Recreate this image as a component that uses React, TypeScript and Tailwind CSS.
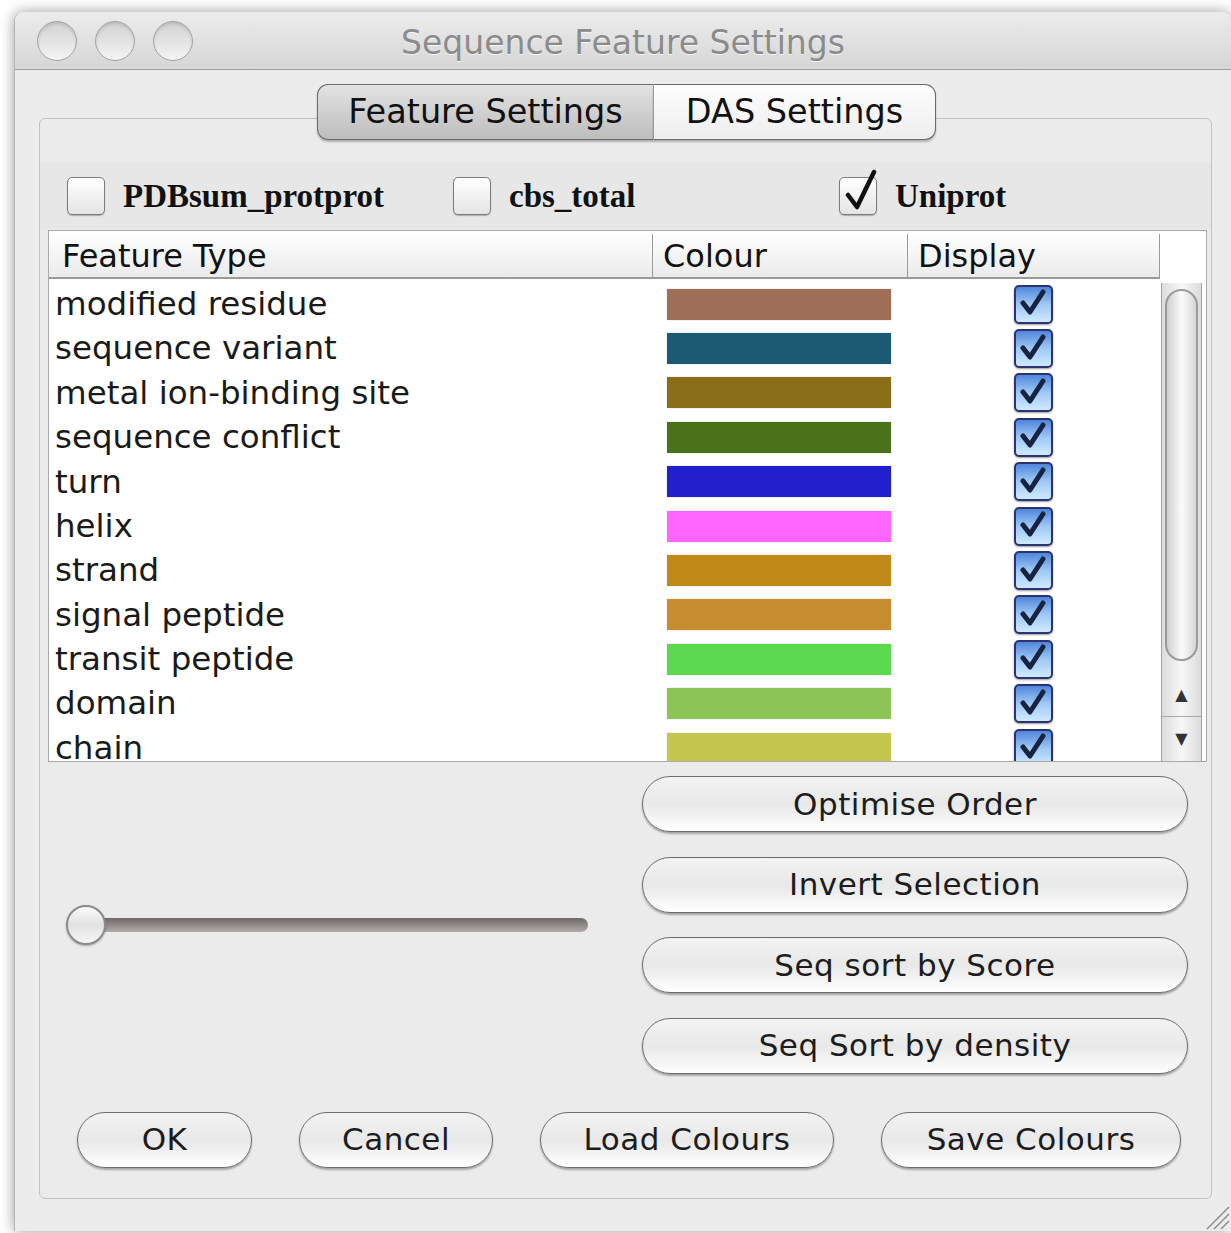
import React from "react";

type Feature = {
  name: string;
  colour: string;
};

const features: Feature[] = [
  { name: "modified residue", colour: "#9e6e56" },
  { name: "sequence variant", colour: "#1a5a73" },
  { name: "metal ion-binding site", colour: "#8a6e18" },
  { name: "sequence conflict", colour: "#4a721a" },
  { name: "turn", colour: "#221fcc" },
  { name: "helix", colour: "#ff66ff" },
  { name: "strand", colour: "#bf8a17" },
  { name: "signal peptide", colour: "#c78c30" },
  { name: "transit peptide", colour: "#5cd84e" },
  { name: "domain", colour: "#8dc456" },
  { name: "chain", colour: "#c3c74e" },
];

const sources = [
  { label: "PDBsum_protprot", checked: false },
  { label: "cbs_total", checked: false },
  { label: "Uniprot", checked: true },
];

const sideActions = [
  "Optimise Order",
  "Invert Selection",
  "Seq sort by Score",
  "Seq Sort by density",
];

const footerActions = [
  { label: "OK", w: "w-[175px]" },
  { label: "Cancel", w: "w-[194px]" },
  { label: "Load Colours", w: "w-[294px]" },
  { label: "Save Colours", w: "w-[300px]" },
];

function TrafficLight() {
  return (
    <span className="h-[40px] w-[40px] rounded-full border border-[#a3a3a3] bg-gradient-to-b from-[#d2d2d2] to-[#f4f4f4] shadow-[inset_0_2px_3px_rgba(0,0,0,0.12)]" />
  );
}

function SourceCheck({ label, checked }: { label: string; checked: boolean }) {
  return (
    <div className="flex w-[386px] shrink-0 items-center gap-[18px]">
      <span className="relative h-[38px] w-[38px] shrink-0 rounded-[5px] border border-[#7a7a7a] bg-gradient-to-b from-white to-[#e4e4e4] shadow-[0_1px_1px_rgba(0,0,0,0.25)]">
        {checked && (
          <svg
            className="absolute -top-[9px] left-[3px]"
            width="36"
            height="44"
            viewBox="0 0 36 44"
          >
            <path
              d="M5 26 L14 38 L31 3"
              fill="none"
              stroke="#111"
              strokeWidth="4.5"
              strokeLinecap="round"
              strokeLinejoin="round"
            />
          </svg>
        )}
      </span>
      <span className="font-['Liberation_Serif',serif] text-[33px] font-bold leading-none text-[#111]">
        {label}
      </span>
    </div>
  );
}

function AquaCheck() {
  return (
    <span className="flex h-[39px] w-[39px] items-center justify-center rounded-[5px] border-2 border-[#2c3370] bg-gradient-to-b from-[#4f86da] via-[#9fc8f5] to-[#cfeaff] shadow-[0_1px_2px_rgba(0,0,0,0.4)]">
      <svg width="30" height="30" viewBox="0 0 30 30">
        <path
          d="M5 14 L12 23 L25 3"
          fill="none"
          stroke="#172340"
          strokeWidth="5"
          strokeLinecap="round"
          strokeLinejoin="round"
        />
      </svg>
    </span>
  );
}

function ScrollBar() {
  return (
    <div className="ml-[2px] mr-[4px] mt-[4px] flex w-[41px] flex-col border-x border-[#a2a2a2] bg-gradient-to-r from-[#dcdcdc] via-[#f7f7f7] to-[#dcdcdc]">
      <div className="mx-[3px] mt-[6px] h-[372px] rounded-full border-2 border-[#9a9a9a] bg-gradient-to-r from-[#cfcfcf] via-[#fbfbfb] to-[#d6d6d6]" />
      <div className="flex-1" />
      <div className="flex h-[44px] items-center justify-center border-b border-[#a8a8a8] text-[16px] leading-none text-[#333]">
        ▲
      </div>
      <div className="flex h-[44px] items-center justify-center text-[16px] leading-none text-[#333]">
        ▼
      </div>
    </div>
  );
}

function PillButton({ label, className }: { label: string; className: string }) {
  return (
    <button
      type="button"
      className={`${className} h-[56px] rounded-full border-[1.5px] border-[#6c6c6c] bg-gradient-to-b from-[#f3f3f3] via-[#e8e8e8] to-white font-['DejaVu_Sans',sans-serif] text-[31px] tracking-[0.5px] text-[#1c1c1c] shadow-[0_2px_2px_rgba(0,0,0,0.3)]`}
    >
      {label}
    </button>
  );
}

export default function App() {
  return (
    <div className="h-[1233px] w-[1231px] overflow-hidden bg-white pl-[14px] pt-[12px] font-['DejaVu_Sans',sans-serif]">
      <div className="relative flex h-[1219px] w-[1217px] flex-col overflow-hidden rounded-t-[9px] border-l border-[#b5b5b5] bg-[#ececec] shadow-[0_0_14px_rgba(0,0,0,0.4)]">
        {/* title bar */}
        <div className="grid h-[58px] shrink-0 grid-cols-[1fr_auto_1fr] items-center border-b border-[#9c9c9c] bg-gradient-to-b from-[#ececec] to-[#d6d6d6]">
          <div className="flex gap-[18px] pl-[22px]">
            <TrafficLight />
            <TrafficLight />
            <TrafficLight />
          </div>
          <div className="pt-[4px] text-[33px] leading-none text-[#8b8b8b] [text-shadow:0_1px_0_rgba(255,255,255,0.7)]">
            Sequence Feature Settings
          </div>
          <div />
        </div>

        <div className="flex flex-1 flex-col pl-[24px] pr-[19px] pt-[14px]">
          {/* tabs */}
          <div className="relative z-10 flex justify-center pl-[2px]">
            <div className="flex h-[56px] w-[336px] items-center justify-center rounded-l-[11px] border-[1.5px] border-r-0 border-[#6a6a6a] bg-gradient-to-b from-[#e3e3e3] to-[#bdbdbd] text-[33.5px] text-[#111] shadow-[0_2px_2px_rgba(0,0,0,0.25)]">
              Feature Settings
            </div>
            <div className="flex h-[56px] w-[283px] items-center justify-center rounded-r-[11px] border-[1.5px] border-l border-[#6a6a6a] border-l-[#9a9a9a] bg-gradient-to-b from-[#fdfdfd] to-[#eeeeee] text-[33.5px] text-[#111] shadow-[0_2px_2px_rgba(0,0,0,0.25)]">
              DAS Settings
            </div>
          </div>

          {/* tab body */}
          <div className="-mt-[22px] flex flex-col rounded-[6px] border border-[#c2c2c2] bg-[#ebebeb] pt-[44px]">
            <div className="flex h-[66px] items-center overflow-hidden bg-[#e7e7e7] pl-[27px]">
              {sources.map((s) => (
                <SourceCheck key={s.label} label={s.label} checked={s.checked} />
              ))}
            </div>

            {/* feature table */}
            <div className="ml-[8px] mr-[4px] mt-[1px] flex h-[532px] flex-col overflow-hidden border border-[#a9a9a9] bg-white">
              <div className="flex h-[48px] shrink-0">
                <div className="flex w-[1111px] border-b-2 border-[#9a9a9a] bg-gradient-to-b from-white to-[#ebebeb] pt-[3px] text-[32px] leading-none text-[#111]">
                  <div className="flex w-[604px] items-center border-r border-[#9a9a9a] pl-[13px]">
                    Feature Type
                  </div>
                  <div className="flex w-[255px] items-center border-r border-[#9a9a9a] pl-[10px]">
                    Colour
                  </div>
                  <div className="flex w-[252px] items-center border-r border-[#9a9a9a] pl-[10px]">
                    Display
                  </div>
                </div>
                <div className="flex-1 bg-white" />
              </div>
              <div className="flex flex-1 overflow-hidden">
                <div className="w-[1111px] overflow-hidden pt-[3px]">
                  {features.map((f) => (
                    <div key={f.name} className="flex h-[44.4px] items-center">
                      <div className="w-[604px] pl-[6px] text-[32.5px] leading-none text-[#1a1a1a]">
                        {f.name}
                      </div>
                      <div className="w-[255px] pl-[15px]">
                        <div
                          className="h-[31px] w-[224px] shadow-[0_0_1px_rgba(0,0,0,0.3)]"
                          style={{ backgroundColor: f.colour }}
                        />
                      </div>
                      <div className="flex w-[252px] justify-center">
                        <AquaCheck />
                      </div>
                    </div>
                  ))}
                </div>
                <ScrollBar />
              </div>
            </div>

            {/* slider and sorting actions */}
            <div className="flex pl-[26px] pr-[23px] pt-[14px]">
              <div className="flex w-[522px] items-center">
                <span className="relative z-10 h-[40px] w-[40px] shrink-0 rounded-full border-2 border-[#8a8a8a] bg-gradient-to-b from-[#fbfbfb] via-[#e2e2e2] to-[#f6f6f6] shadow-[0_1px_2px_rgba(0,0,0,0.3)]" />
                <span className="-ml-[2px] h-[14px] flex-1 rounded-r-full bg-gradient-to-b from-[#6f6a68] to-[#b1acaa]" />
              </div>
              <div className="ml-auto flex w-[546px] flex-col gap-[24.5px]">
                {sideActions.map((a) => (
                  <PillButton key={a} label={a} className="w-full" />
                ))}
              </div>
            </div>

            <div className="flex gap-[47px] pb-[30px] pl-[37px] pt-[38px]">
              {footerActions.map((a) => (
                <PillButton key={a.label} label={a.label} className={a.w} />
              ))}
            </div>
          </div>
        </div>

        {/* resize grip */}
        <svg
          className="absolute bottom-0 right-0"
          width="32"
          height="32"
          viewBox="0 0 32 32"
        >
          <path
            d="M30 8 L8 30 M30 15 L15 30 M30 22 L22 30"
            stroke="#8e8e8e"
            strokeWidth="1.5"
          />
        </svg>
      </div>
    </div>
  );
}
